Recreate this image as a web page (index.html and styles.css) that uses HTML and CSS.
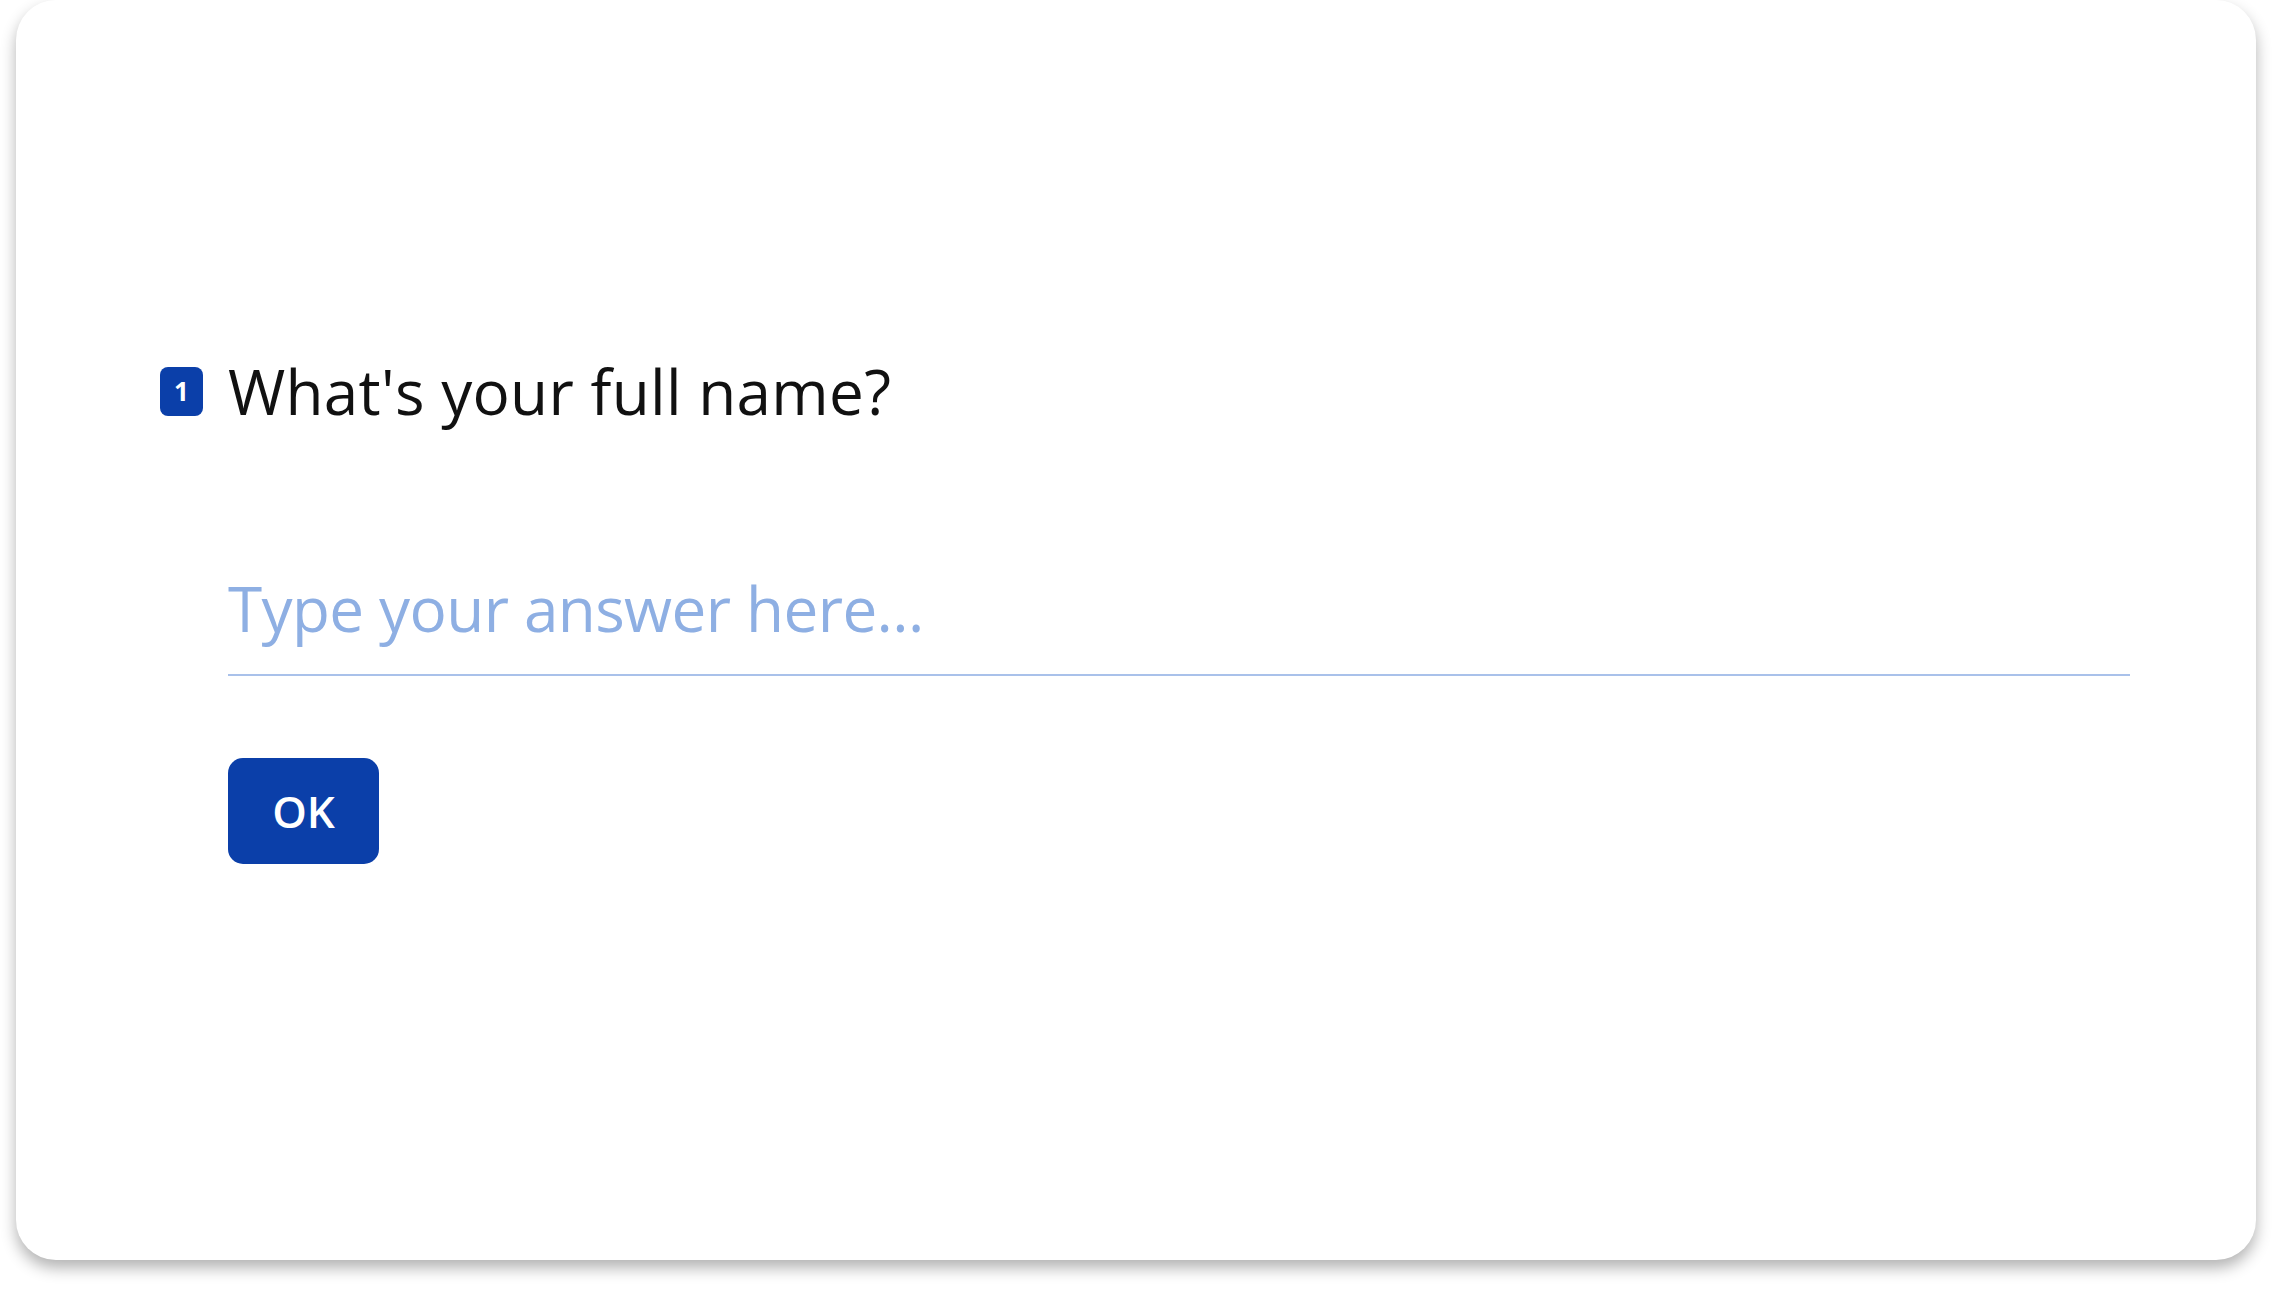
FILE: index.html
```html
<!DOCTYPE html>
<html lang="en">
<head>
<meta charset="utf-8">
<title>Form</title>
<link rel="stylesheet" href="styles.css">
</head>
<body>
<div class="page">
  <main class="card">
    <div class="question">
      <div class="question-row">
        <span class="badge">1</span>
        <h1 class="question-title">What's your full name?</h1>
      </div>
      <div class="answer">
        <input class="answer-input" type="text" placeholder="Type your answer here...">
        <button class="ok-btn" type="button">OK</button>
      </div>
    </div>
  </main>
</div>
</body>
</html>
```

FILE: styles.css
```css
html, body {
  margin: 0;
  padding: 0;
  background: #ffffff;
}

body {
  font-family: "Open Sans", "Noto Sans", sans-serif;
}

.page {
  padding: 0 16px 32px;
}

.card {
  box-sizing: border-box;
  height: 1260px;
  background: #ffffff;
  border-radius: 40px;
  box-shadow: 0 8px 15px rgba(0, 0, 0, 0.3);
  display: flex;
  flex-direction: column;
  justify-content: center;
  padding: 0 126px 42px 144px;
}

.question-row {
  display: flex;
  align-items: center;
  gap: 25px;
}

.badge {
  width: 43px;
  height: 49px;
  border-radius: 8px;
  background: #0b3fa9;
  color: #ffffff;
  font-weight: 700;
  font-size: 26px;
  display: flex;
  align-items: center;
  justify-content: center;
  flex-shrink: 0;
}

.question-title {
  margin: 0;
  font-size: 62px;
  line-height: 74px;
  font-weight: 400;
  color: #111111;
  letter-spacing: 0.3px;
}

.answer {
  padding-left: 68px;
  display: flex;
  flex-direction: column;
  align-items: flex-start;
}

.answer-input {
  box-sizing: content-box;
  width: 100%;
  margin-top: 143px;
  height: 74px;
  padding: 0 0 29px;
  border: none;
  border-bottom: 2px solid #a9c1ea;
  outline: none;
  font-family: inherit;
  font-size: 62px;
  letter-spacing: -0.6px;
  color: #0b3fa9;
  background: transparent;
}

.answer-input::placeholder {
  color: #8eafe3;
}

.ok-btn {
  margin-top: 82px;
  width: 151px;
  height: 106px;
  border: none;
  border-radius: 15px;
  background: #0b3fa9;
  color: #ffffff;
  font-family: inherit;
  font-size: 44px;
  font-weight: 600;
  padding: 0;
  cursor: pointer;
}
```
